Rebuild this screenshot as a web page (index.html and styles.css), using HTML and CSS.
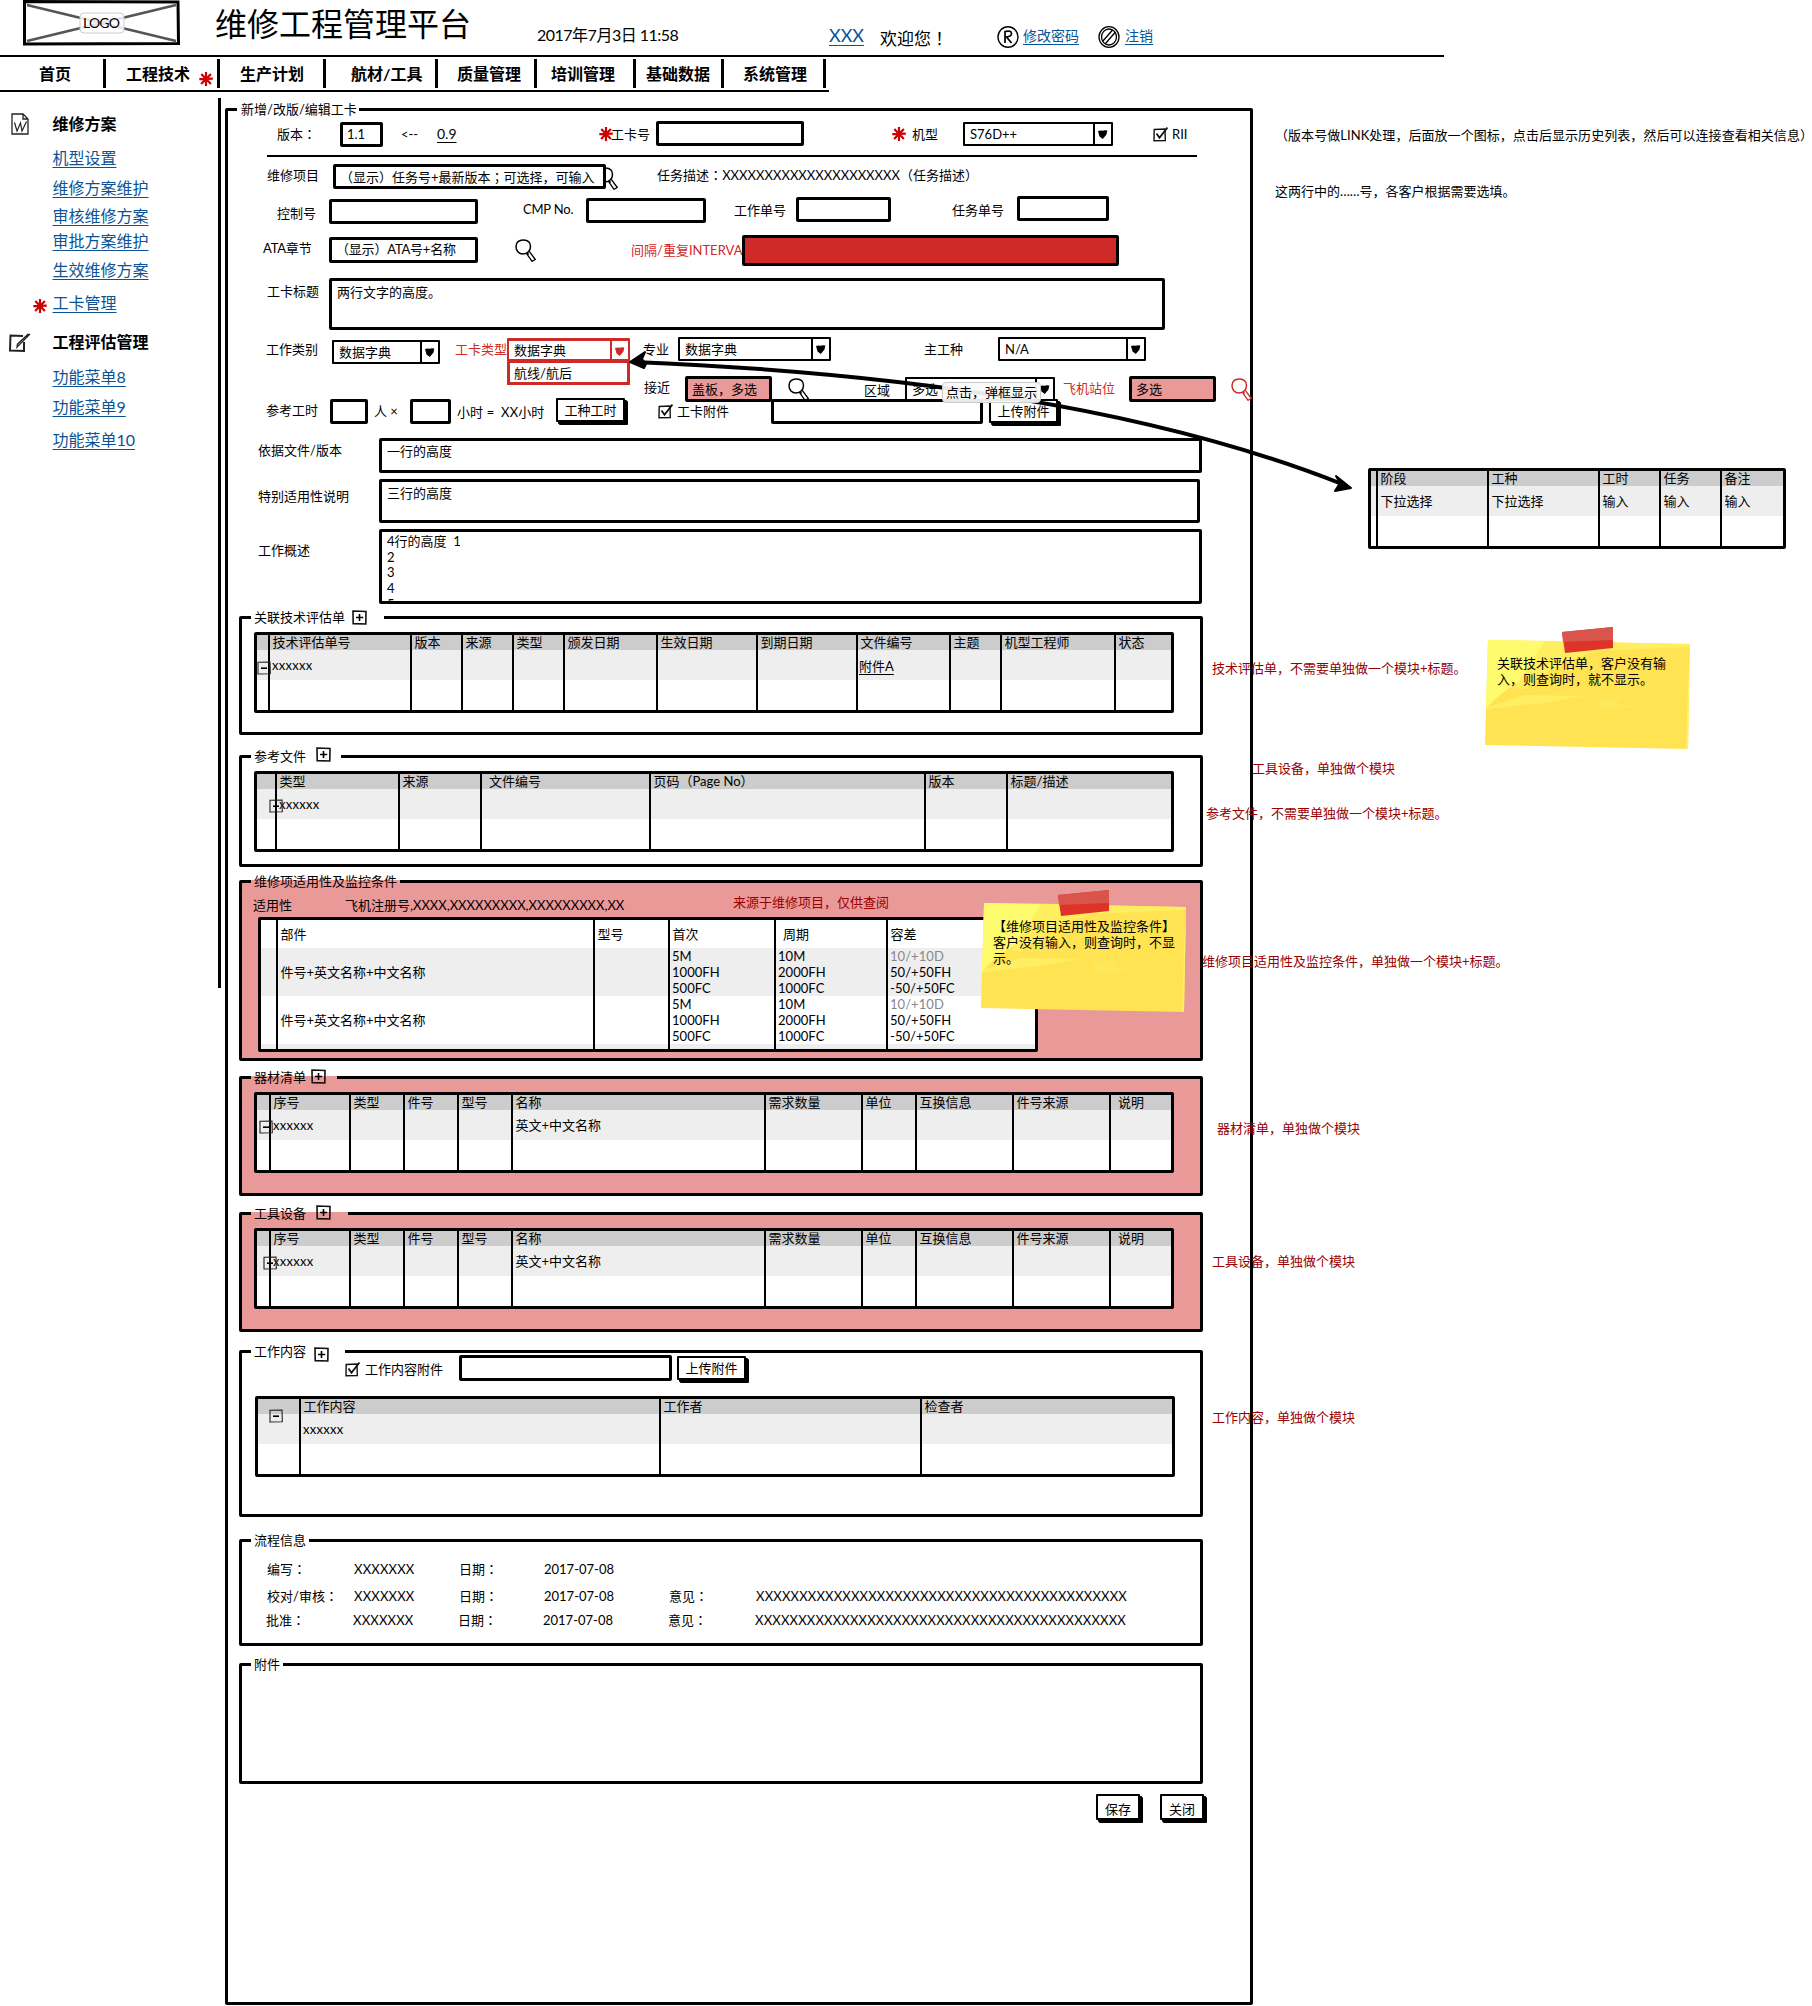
FILE: index.html
```html
<!DOCTYPE html>
<html lang="zh-CN">
<head>
<meta charset="utf-8">
<title>维修工程管理平台</title>
<link rel="stylesheet" href="styles.css">
</head>
<body>
<svg class="defs" width="0" height="0">
  <symbol id="star" viewBox="0 0 14 14"><path d="M7 0V14M.3 7.200L13.800 6.600M2.300 2.100L11.900 11.900M11.900 1.900L2.100 12.100" fill="none" stroke="#cc0000" stroke-width="2.200"/></symbol>
  <symbol id="lens" viewBox="0 0 21 23"><path d="M8.500 1C4 .8 1 3.500 1 7.500C1 12 4 15 8 15C12.500 15 15.500 11.500 15.500 7.500C15.500 3.500 12.500 1.200 8.500 1Z" fill="none" stroke="currentColor" stroke-width="1.500"/><path d="M11.300 14.200L17 22.300L20.300 20.500L14.300 12.400M12.300 13.500L13.600 15.500" fill="none" stroke="currentColor" stroke-width="1.300"/></symbol>
  <symbol id="check" viewBox="0 0 15 15"><path d="M1.200 2.500L12 2L12.300 13.500L1 13.800Z" fill="none" stroke="#111" stroke-width="1.400"/><path d="M3.500 6.500L6.500 10.800L14.500 .5" fill="none" stroke="#111" stroke-width="1.800"/></symbol>
  <symbol id="plus" viewBox="0 0 15 15"><path d="M1 1L14 1.500L13.800 14L1.200 13.600Z" fill="none" stroke="#111" stroke-width="1.600"/><path d="M7.500 4V11M4 7.500H11.200" stroke="#000" stroke-width="1.600"/></symbol>
  <symbol id="minus" viewBox="0 0 14 14"><path d="M1 1.200L13 1L13.300 12.800L1 13Z" fill="none" stroke="#222" stroke-width="1.100"/><path d="M4 7.200H10" stroke="#000" stroke-width="1.600"/></symbol>
  <symbol id="down" viewBox="0 0 11 11"><path d="M1 2L3.500 1.400L5.500 1.800L8 1.200L10.300 1.500L9.500 5.500L5.800 10L2.500 7.500Z" fill="currentColor"/></symbol>
  <symbol id="note" viewBox="0 0 206 124" preserveAspectRatio="none">
    <path d="M3 13L205 17L203 122L0 118Z" fill="#ffe352"/>
    <path d="M3 13L80 14L60 34L38 52L20 64L8 74L1 82Z" fill="#fffb6e"/>
    <path d="M60 14L205 17L205 20L110 24L70 40L40 62L30 60Z" fill="#ffee5f"/>
    <path d="M2 80L40 68L98 69L60 76L2 82Z" fill="#ffee62"/>
    <path d="M112 73L140 69L130 76L150 80L118 84Z" fill="#ffe75c"/>
    <path d="M205 17L203 122L201 121L203 60Z" fill="#fff06a"/>
    <path d="M77 5L128 0L128 21L80 26Z" fill="#dd3329"/>
    <path d="M77 5L128 0L128 13L78 15Z" fill="#d9544b"/>
  </symbol>
</svg>

<header class="top">
  <svg class="logo" viewBox="0 0 157 45"><path d="M1.500 1.500L155 2L155.500 43.500L1.500 44Z" fill="#fff" stroke="#000" stroke-width="3"/><path d="M4 5L153 41M4 41L153 5" stroke="#555" stroke-width="2.600"/><rect x="57" y="13" width="44" height="20" rx="4" fill="#fff" fill-opacity=".85" stroke="#ccc"/><text x="78.500" y="27.500" text-anchor="middle" textLength="37">LOGO</text></svg>
  <h1 class="m4">维修工程管理平台</h1>
  <span class="date m25">2017年7月3日 11:58</span>
  <a class="user m25">XXX</a>
  <span class="hello m28">欢迎您<span class="mid" lang="zh-TW">！</span></span>
  <svg class="round m26" viewBox="0 0 22 22"><ellipse cx="11" cy="11" rx="10" ry="10.300" fill="none" stroke="#000" stroke-width="1.400"/><path d="M8 17V5.500Q14.500 4 14.500 7.500Q14.500 10.500 9.500 11L14.500 17" fill="none" stroke="#000" stroke-width="1.700"/></svg>
  <a class="act m26">修改密码</a>
  <svg class="round m26" viewBox="0 0 22 22"><ellipse cx="11" cy="11" rx="10" ry="10.300" fill="none" stroke="#000" stroke-width="1.300"/><ellipse cx="11" cy="11" rx="7.500" ry="8" fill="none" stroke="#000" stroke-width="1.300"/><path d="M4.500 15.500L14.500 4M7.500 17.500L17.500 6" stroke="#000" stroke-width="1.300"/></svg>
  <a class="act m26">注销</a>
</header>
<nav class="menu">
  <span class="n1">首页</span><span class="n2">工程技术<svg class="star"><use href="#star"/></svg></span><span class="n3">生产计划</span><span class="n4">航材/工具</span><span class="n5">质量管理</span><span class="n6">培训管理</span><span class="n7">基础数据</span><span class="n8">系统管理</span>
</nav>

<div class="layout">
<aside class="side">
  <svg class="i-doc" viewBox="0 0 18 22"><path d="M1 1H12L17 6V21H1ZM12 1V6H17" fill="none" stroke="#222" stroke-width="1.300"/><path d="M3.500 9.500L6 18L9.500 10L11 18L15.500 8.500" fill="none" stroke="#222" stroke-width="1.200"/></svg>
  <svg class="i-pen" viewBox="0 0 22 19"><path d="M14 3L1.500 2.500L1 17.500L15 18V9" fill="none" stroke="#222" stroke-width="2"/><path d="M21 1L10 12L8 14L8.500 11L19.500 .8" fill="none" stroke="#222" stroke-width="1.300"/></svg>
  <svg class="star i-star"><use href="#star"/></svg>
  <b>维修方案</b><a>机型设置</a><a>维修方案维护</a><a>审核维修方案</a><a>审批方案维护</a><a>生效维修方案</a><a>工卡管理</a><b>工程评估管理</b><a>功能菜单8</a><a>功能菜单9</a><a>功能菜单10</a>
</aside>

<main class="panel">
  <div class="legend lg-main"><span>新增/改版/编辑工卡</span></div>

  <div class="row r1">
    <label class="m8">版本<span class="mid" lang="zh-TW">：</span></label><div class="box w43 m3">1.1</div><span class="m8">&lt;--</span><span class="m8"><u class="ver">0.9</u></span>
    <svg class="star m8"><use href="#star"/></svg><label class="m8">工卡号</label><div class="box w148 m2"></div>
    <svg class="star m8"><use href="#star"/></svg><label class="m8">机型</label>
    <div class="select w150 m3"><span>S76D++</span><i><svg><use href="#down"/></svg></i></div>
    <svg class="check m8"><use href="#check"/></svg><label class="m8">RII</label>
  </div>
  <hr>
  <div class="row r2">
    <label class="m11">维修项目</label><div class="box w273 m7 front">（显示）任务号+最新版本<span class="mid" lang="zh-TW">；</span>可选择，可输入</div><svg class="lens m10"><use href="#lens"/></svg>
    <span class="m11 desc">任务描述<span class="mid" lang="zh-TW">：</span>XXXXXXXXXXXXXXXXXXXXX（任务描述）</span>
  </div>
  <div class="row r3">
    <label class="m11">控制号</label><div class="box w149 m4"></div><label class="m7 tight">CMP No.</label><div class="box w120 m3"></div>
    <label class="m8">工作单号</label><div class="box w95 m2"></div><label class="m8">任务单号</label><div class="box w92 m1"></div>
  </div>
  <div class="row r4">
    <label class="m9 tight">ATA章节</label><div class="box w149 m5 narrow">（显示）ATA号+名称</div><svg class="lens m7"><use href="#lens"/></svg>
    <label class="m11 red">间隔/重复INTERVA</label><div class="box alert w377 m3"></div>
  </div>
  <div class="row r5"><label class="m10">工卡标题</label><div class="area a1 m4">两行文字的高度。</div></div>
  <div class="row r6">
    <label class="m8">工作类别</label><div class="select w108 m6"><span>数据字典</span><i><svg><use href="#down"/></svg></i></div>
    <label class="m8 red">工卡类型</label>
    <div class="combo m4"><div class="select"><span>数据字典</span><i><svg><use href="#down"/></svg></i></div><div class="option">航线/航后</div></div>
    <label class="m8 shift">专业</label><div class="select w153 m3"><span>数据字典</span><i><svg><use href="#down"/></svg></i></div>
    <label class="m8">主工种</label><div class="select w148 m3"><span>N/A</span><i><svg><use href="#down"/></svg></i></div>
  </div>
  <div class="row r7">
    <label class="m6 shift">接近</label><div class="box pink w87 m2">盖板，多选</div><svg class="lens m4"><use href="#lens"/></svg>
    <label class="m9">区域</label><div class="select w150 m3"><span>多选</span><i><svg><use href="#down"/></svg></i></div>
    <label class="m7 red">飞机站位</label><div class="box pink w87 m2">多选</div><svg class="lens red m4"><use href="#lens"/></svg>
  </div>
  <div class="row r8">
    <label class="m5">参考工时</label><div class="box w38 m1"></div><span class="m6">人 ×</span><div class="box w41 m1"></div><span class="m7 hours">小时 =&nbsp; XX小时</span>
    <button class="w69">工种工时</button>
    <svg class="check m6"><use href="#check"/></svg><label class="m6">工卡附件</label><div class="box w212 m1"></div><button class="w69 m1">上传附件</button>
  </div>
  <div class="row r9"><label class="m9">依据文件/版本</label><div class="area a2 m4">一行的高度</div></div>
  <div class="row r10"><label class="m12">特别适用性说明</label><div class="area a3 m2">三行的高度</div></div>
  <div class="row r11"><label class="m16">工作概述</label><div class="area a4 m2">4行的高度&nbsp; 1<br>2<br>3<br>4<br>5</div></div>

  <section class="group g1">
    <div class="legend lg1"><span>关联技术评估单</span><svg class="plus"><use href="#plus"/></svg></div>
    <table class="grid t1">
      <tr><th></th><th>技术评估单号</th><th>版本</th><th>来源</th><th>类型</th><th>颁发日期</th><th>生效日期</th><th>到期日期</th><th>文件编号</th><th>主题</th><th>机型工程师</th><th>状态</th></tr>
      <tr><td></td><td class="x">xxxxxx</td><td></td><td></td><td></td><td></td><td></td><td></td><td class="att"><u>附件A</u></td><td></td><td></td><td></td></tr>
      <tr><td></td><td></td><td></td><td></td><td></td><td></td><td></td><td></td><td></td><td></td><td></td><td></td></tr>
    </table>
    <svg class="minus p1"><use href="#minus"/></svg>
  </section>

  <section class="group g2">
    <div class="legend lg2"><span>参考文件</span><svg class="plus up"><use href="#plus"/></svg></div>
    <table class="grid t2">
      <tr><th></th><th>类型</th><th>来源</th><th class="in">文件编号</th><th>页码（Page No）</th><th>版本</th><th>标题/描述</th></tr>
      <tr><td></td><td class="x">xxxxxx</td><td></td><td></td><td></td><td></td><td></td></tr>
      <tr><td></td><td></td><td></td><td></td><td></td><td></td><td></td></tr>
    </table>
    <svg class="minus p2"><use href="#minus"/></svg>
  </section>

  <section class="group g3 fill">
    <div class="legend lg3"><span>维修项适用性及监控条件</span></div>
    <div class="row apply"><label>适用性</label><span class="regs">飞机注册号,XXXX,XXXXXXXXX,XXXXXXXXX,XX</span><span class="dark src">来源于维修项目，仅供查阅</span></div>
    <table class="grid t3">
      <tr><th></th><th>部件</th><th>型号</th><th>首次</th><th class="in">周期</th><th>容差</th></tr>
      <tr><td></td><td>件号+英文名称+中文名称</td><td></td><td class="num">5M<br>1000FH<br>500FC</td><td class="num">10M<br>2000FH<br>1000FC</td><td class="num"><em>10/+10D</em><br>50/+50FH<br>-50/+50FC</td></tr>
      <tr><td></td><td>件号+英文名称+中文名称</td><td></td><td class="num">5M<br>1000FH<br>500FC</td><td class="num">10M<br>2000FH<br>1000FC</td><td class="num"><em>10/+10D</em><br>50/+50FH<br>-50/+50FC</td></tr>
      <tr><td></td><td></td><td></td><td></td><td></td><td></td></tr>
    </table>
  </section>

  <section class="group g4 fill">
    <div class="legend lg4"><span>器材清单</span><svg class="plus up1"><use href="#plus"/></svg></div>
    <table class="grid t4">
      <tr><th></th><th>序号</th><th>类型</th><th>件号</th><th>型号</th><th>名称</th><th>需求数量</th><th>单位</th><th>互换信息</th><th>件号来源</th><th class="in">说明</th></tr>
      <tr><td></td><td class="x">xxxxxx</td><td></td><td></td><td></td><td>英文+中文名称</td><td></td><td></td><td></td><td></td><td></td></tr>
      <tr><td></td><td></td><td></td><td></td><td></td><td></td><td></td><td></td><td></td><td></td><td></td></tr>
    </table>
    <svg class="minus p4"><use href="#minus"/></svg>
  </section>

  <section class="group g5 fill">
    <div class="legend lg5"><span>工具设备</span><svg class="plus up1"><use href="#plus"/></svg></div>
    <table class="grid t4">
      <tr><th></th><th>序号</th><th>类型</th><th>件号</th><th>型号</th><th>名称</th><th>需求数量</th><th>单位</th><th>互换信息</th><th>件号来源</th><th class="in">说明</th></tr>
      <tr><td></td><td class="x">xxxxxx</td><td></td><td></td><td></td><td>英文+中文名称</td><td></td><td></td><td></td><td></td><td></td></tr>
      <tr><td></td><td></td><td></td><td></td><td></td><td></td><td></td><td></td><td></td><td></td><td></td></tr>
    </table>
    <svg class="minus p5"><use href="#minus"/></svg>
  </section>

  <section class="group g6">
    <div class="legend lg6"><span>工作内容</span><svg class="plus dn"><use href="#plus"/></svg></div>
    <div class="row upload"><svg class="check m9"><use href="#check"/></svg><label class="m9">工作内容附件</label><div class="box w213 m2"></div><button class="w69 m3">上传附件</button></div>
    <table class="grid t6">
      <tr><th></th><th>工作内容</th><th>工作者</th><th>检查者</th></tr>
      <tr><td></td><td class="x">xxxxxx</td><td></td><td></td></tr>
      <tr><td></td><td></td><td></td><td></td></tr>
    </table>
    <svg class="minus p6"><use href="#minus"/></svg>
  </section>

  <section class="group g7">
    <div class="legend lg7"><span>流程信息</span></div>
    <div class="row flow f1"><span>编写<span class="mid" lang="zh-TW">：</span></span><span class="xs">XXXXXXX</span><span>日期<span class="mid" lang="zh-TW">：</span></span><span class="day">2017-07-08</span></div>
    <div class="row flow f2"><span>校对/审核<span class="mid" lang="zh-TW">：</span></span><span class="xs">XXXXXXX</span><span>日期<span class="mid" lang="zh-TW">：</span></span><span class="day">2017-07-08</span><span>意见<span class="mid" lang="zh-TW">：</span></span><span class="xs">XXXXXXXXXXXXXXXXXXXXXXXXXXXXXXXXXXXXXXXXXXX</span></div>
    <div class="row flow f3"><span>批准<span class="mid" lang="zh-TW">：</span></span><span class="xs">XXXXXXX</span><span>日期<span class="mid" lang="zh-TW">：</span></span><span class="day">2017-07-08</span><span>意见<span class="mid" lang="zh-TW">：</span></span><span class="xs">XXXXXXXXXXXXXXXXXXXXXXXXXXXXXXXXXXXXXXXXXXX</span></div>
  </section>

  <section class="group g8"><div class="legend lg8"><span>附件</span></div></section>

  <div class="buttons"><button>保存</button><button>关闭</button></div>
</main>
</div>

<!-- Review notes pinned over the form -->
<p class="pin k1">（版本号做LINK处理，后面放一个图标，点击后显示历史列表，然后可以连接查看相关信息）</p>
<p class="pin k2">这两行中的<span class="dots">……</span>号，各客户根据需要选填。</p>
<p class="pin dark d1">技术评估单，不需要单独做一个模块+标题。</p>
<p class="pin dark d2">工具设备，单独做个模块</p>
<p class="pin dark d3">参考文件，不需要单独做一个模块+标题。</p>
<p class="pin dark d4">维修项目适用性及监控条件，单独做一个模块+标题。</p>
<p class="pin dark d5">器材清单，单独做个模块</p>
<p class="pin dark d6">工具设备，单独做个模块</p>
<p class="pin dark d7">工作内容，单独做个模块</p>

<div class="pin popup">
  <table class="grid t9">
    <tr><th></th><th>阶段</th><th>工种</th><th>工时</th><th>任务</th><th>备注</th></tr>
    <tr><td></td><td>下拉选择</td><td>下拉选择</td><td>输入</td><td>输入</td><td>输入</td></tr>
    <tr><td></td><td></td><td></td><td></td><td></td><td></td></tr>
  </table>
</div>

<div class="pin note s1"><svg><use href="#note"/></svg><p>【维修项目适用性及监控条件】<br>客户没有输入，则查询时，不显<br>示。</p></div>
<div class="pin note s2"><svg><use href="#note"/></svg><p>关联技术评估单，客户没有输<br>入，则查询时，就不显示。</p></div>

<svg class="pin arrow" viewBox="0 0 740 150"><path d="M14 12Q460 30 722 134" fill="none" stroke="#000" stroke-width="4"/><path d="M10 12L25 2L22 9L26 14L24 18Z M731 138L716 126L720 133L715 141Z" fill="#000" stroke="#000" stroke-width="2" stroke-linejoin="round"/></svg>
<span class="pin tip">点击，弹框显示</span>
</body>
</html>
```
FILE: styles.css
```css
* { box-sizing: border-box; }
body {
  margin: 0; width: 1812px; height: 2006px; position: relative; overflow: hidden;
  background: #fff; color: #000;
  font: 13px/16px Lato, "Noto Sans CJK SC", sans-serif;
}
p, h1 { margin: 0; }
svg { display: block; overflow: visible; }
.defs { position: absolute; }
a { color: #0b5394; text-decoration: underline; text-decoration-thickness: 1px; text-underline-offset: 3px; }
.red { color: #cf2a27; }
.dark { color: #990000; }
.tight { letter-spacing: -.2px; }
.mid { font-family: "Noto Sans CJK TC", sans-serif; }
.dots { font-family: Lato, sans-serif; }
.m1 { margin-top: 1px; } .m2 { margin-top: 2px; } .m3 { margin-top: 3px; } .m4 { margin-top: 4px; }
.m5 { margin-top: 5px; } .m6 { margin-top: 6px; } .m7 { margin-top: 7px; } .m8 { margin-top: 8px; }
.m9 { margin-top: 9px; } .m10 { margin-top: 10px; } .m11 { margin-top: 11px; } .m12 { margin-top: 12px; }
.m16 { margin-top: 16px; } .m25 { margin-top: 25px; } .m26 { margin-top: 26px; } .m28 { margin-top: 28px; }

/* icons */
.star { width: 14px; height: 14px; }
.check { width: 15px; height: 15px; }
.lens { width: 21px; height: 23px; }
.plus { width: 15px; height: 15px; }
.minus { position: absolute; width: 14px; height: 14px; }

/* header */
.top {
  display: grid; grid-template-columns: 192px 322px 292px 51px 117px 26px 75px 27px 1fr;
  align-items: start; width: 1444px; height: 57px; padding-left: 23px; border-bottom: 2px solid #000; white-space: nowrap;
}
.logo { width: 157px; height: 45px; font: 14px Lato, sans-serif; }
h1 { font-size: 32px; line-height: 40px; font-weight: 400; }
.date { font-size: 16px; line-height: 20px; letter-spacing: -.5px; }
.user { font-size: 18px; line-height: 20px; }
.hello { font-size: 17px; line-height: 20px; }
.act { font-size: 14px; line-height: 20px; }
.round { width: 22px; height: 22px; }
.menu { display: flex; width: 829px; height: 35px; padding-top: 2px; border-bottom: 2px solid #000; font-size: 16px; font-weight: 700; line-height: 30px; }
.menu span { display: flex; height: 29px; border-right: 3px solid #000; white-space: nowrap; }
.menu .star { margin: 13px 0 0 9px; }
.n1 { width: 106px; padding-left: 39px; }
.n2 { width: 114px; padding-left: 20px; }
.n3 { width: 106px; padding-left: 20px; }
.n4 { width: 112px; padding-left: 25px; }
.n5 { width: 99px; padding-left: 19px; }
.n6 { width: 99px; padding-left: 14px; }
.n7 { width: 88px; padding-left: 10px; }
.n8 { width: 102px; padding-left: 19px; }

/* sidebar */
.layout { display: flex; align-items: flex-start; }
.side {
  display: grid; grid-template-columns: 43.5px 1fr;
  grid-template-rows: 34px 30px 28px 25px 29px 33px 39px 35px 30px 33px 20px;
  align-content: start; align-items: start; width: 221px; height: 890px; margin-top: 6px;
  padding: 16px 0 0 9px; border-right: 3px solid #000; font-size: 16px; line-height: 20px;
}
.side a, .side b { grid-column: 2; justify-self: start; }
.i-doc { grid-area: 1 / 1; width: 18px; height: 22px; margin: -1px 0 0 2px; }
.i-pen { grid-area: 8 / 1; width: 22px; height: 19px; margin-top: 1px; }
.i-star { grid-area: 7 / 1; margin: 6px 0 0 24px; }

/* form panel */
.panel { position: relative; width: 1028px; height: 1897px; margin: 16px 0 0 4px; padding-top: 8px; border: 3px solid #000; border-radius: 2px; background: #fff; }
.row { display: grid; align-items: start; white-space: nowrap; }
.row > label, .row > span { display: block; line-height: 14px; margin-left: -1px; }
.row > .shift { margin-left: 0; }
hr { width: 930px; height: 2px; margin: 0 0 0 39px; border: 0; background: #000; }
.r1 { height: 36px; padding-left: 50px; grid-template-columns: 62px 62px 36px 161px 13px 44px 236px 21px 50px 190px 20px 1fr; }
.r2 { height: 38px; padding-left: 40px; grid-template-columns: 65px 264px 61px 1fr; }
.r3 { height: 37px; padding-left: 50px; grid-template-columns: 51px 195px 62px 149px 61px 157px 64px 1fr; }
.r4 { height: 42px; padding-left: 36px; grid-template-columns: 65px 186px 117px 110px 1fr; }
.r5 { height: 60px; padding-left: 40px; grid-template-columns: 61px 1fr; }
.r6 { height: 40px; padding-left: 39px; grid-template-columns: 65px 124px 51px 136px 35px 247px 73px 1fr; }
.r7 { height: 24px; padding-left: 416px; grid-template-columns: 41px 103px 77px 40px 159px 65px 102px 1fr; }
.r8 { height: 36px; padding-left: 39px; grid-template-columns: 63px 45px 35px 48px 98px 102px 20px 93px 218px 1fr; }
.r9 { height: 43px; } .r10 { height: 50px; } .r11 { height: 89px; }
.r9, .r10, .r11 { padding-left: 31px; grid-template-columns: 120px 1fr; }
.front { z-index: 1; }
.desc { letter-spacing: .03px; }
.hours { letter-spacing: .1px; }
.ver { font-size: 14px; text-underline-offset: 3px; }

.box { height: 25px; padding: 0 4px; line-height: 19px; border: 3px solid #000; border-radius: 2px; background: #fff; }
.narrow { letter-spacing: -.2px; }
.r4 .box { height: 26px; }
.r4 .alert { height: 31px; background: #cf2a27; }
.pink { height: 26px; background: #ea9999; }
.row .pink { line-height: 20px; }
.select { display: flex; height: 24px; border: 2px solid #000; border-radius: 1px; background: #fff; line-height: 20px; }
.select span { flex: 1; padding-left: 5px; }
.select i { width: 18px; border-left: 2px solid #000; }
.select i svg { width: 11px; height: 11px; margin: 5px 0 0 2px; }
.combo { width: 123px; }
.combo .select { color: #cf2a27; border-color: #cf2a27; border-width: 3px 2px; line-height: 18px; }
.combo .select span, .option { color: #000; }
.combo .select i { border-color: #cf2a27; }
.option { height: 23px; padding-left: 4px; line-height: 20px; border: 3px solid #cf2a27; border-top-width: 1px; background: #fff; }
.area { border: 3px solid #000; border-radius: 2px; background: #fff; padding: 3px 5px 0; overflow: hidden; }
.a1 { width: 836px; height: 52px; }
.a2 { width: 823px; height: 35px; padding-top: 2px; }
.a3 { width: 821px; height: 44px; }
.a4 { width: 823px; height: 75px; padding-top: 2px; line-height: 15.7px; }
button { height: 24px; padding: 0; font: inherit; color: #000; background: #fff; border: 2px solid #000; border-radius: 1px; box-shadow: 2px 2px 0 #000, 3px 3px 0 #000; }
.w38 { width: 38px; } .w41 { width: 41px; } .w43 { width: 43px; } .w69 { width: 69px; }
.w87 { width: 87px; } .w92 { width: 92px; } .w95 { width: 95px; } .w108 { width: 108px; } .w120 { width: 120px; }
.w148 { width: 148px; } .w149 { width: 149px; } .w150 { width: 150px; } .w153 { width: 153px; } .w212 { width: 212px; }
.w213 { width: 213px; } .w273 { width: 273px; } .w377 { width: 377px; }

/* groups: the legend strip interrupts the top border */
.group { position: relative; width: 964px; margin-left: 11px; border: 3px solid #000; border-radius: 2px; background: #fff; }
.fill { background: #ea9999; }
.legend { position: absolute; top: -3px; left: 9px; height: 3px; line-height: 2px; padding-left: 3px; display: flex; align-items: center; justify-content: space-between; background: inherit; white-space: nowrap; }
.legend span { margin-top: -2px; }
.lg-main { width: 122px; padding-left: 4px; }
.lg1 { width: 133px; padding-right: 17px; }
.lg2 { width: 90px; padding-right: 10px; }
.lg3 { width: 149px; }
.lg4 { width: 86px; padding-right: 11px; }
.lg5 { width: 97px; padding-right: 17px; }
.lg6 { width: 94px; padding-right: 16px; }
.lg7 { width: 58px; }
.lg8 { width: 32px; }
.legend .plus { flex: none; }
.legend .up { margin-top: -5px; }
.legend .up1 { margin-top: -2px; }
.legend .dn { margin-top: 5px; }
.g1 { height: 119px; padding: 13px 0 0 12px; }
.g2 { height: 112px; margin-top: 20px; padding: 13px 0 0 12px; }
.g3 { height: 181px; margin-top: 13px; padding: 15px 0 0 12px; }
.g4 { height: 120px; margin-top: 15px; padding: 13px 0 0 12px; }
.g5 { height: 120px; margin-top: 16px; padding: 13px 0 0 12px; }
.g6 { height: 167px; margin-top: 18px; padding-left: 13px; }
.g7 { height: 107px; margin-top: 22px; padding-top: 20px; }
.g8 { height: 121px; margin-top: 17px; }
.apply { height: 19px; grid-template-columns: 92px 388px 1fr; }
.src { margin-top: -3px; }
.upload { height: 43px; padding-left: 90px; grid-template-columns: 21px 93px 218px 1fr; }
.upload .box { height: 26px; }
.flow { grid-template-columns: 87px 105px 85px 125px 87px 1fr; }
.xs { letter-spacing: .19px; }
.f1 { height: 27px; padding-left: 26px; }
.f2 { height: 24px; padding-left: 26px; }
.f3 { height: 24px; padding-left: 25px; }
.p1 { left: 15px; top: 42px; } .p2 { left: 27px; top: 41px; } .p4 { left: 17px; top: 41px; }
.p5 { left: 21px; top: 41px; } .p6 { left: 27px; top: 56px; }
.buttons { display: flex; gap: 20px; margin: 10px 0 0 868px; }
.buttons button { width: 44px; height: 26px; padding-top: 4px; }

/* data grids */
.grid { width: 920px; table-layout: fixed; border-collapse: separate; border-spacing: 0; border: 3px solid #000; border-radius: 2px; background: #fff; }
.grid th, .grid td { padding: 0 0 0 2.5px; border-right: 2px solid #000; text-align: left; font-weight: 400; white-space: nowrap; overflow: visible; }
.grid th:last-child, .grid td:last-child { border-right: 0; }
.grid th { height: 15px; line-height: 15px; background: #ccc; }
.grid td { height: 30px; }
.grid tr:nth-child(2) td { background: #eee; }
.grid .in { padding-left: 7px; }
.grid .x { padding-left: 2px; letter-spacing: .3px; }
.att u { text-underline-offset: 3px; }
.grid .att { padding: 2px 0 0 1px; }
.t1 th:nth-child(1) { width: 13px; } .t1 th:nth-child(2) { width: 142px; }
.t1 th:nth-child(n+3):nth-child(-n+5), .t1 th:nth-child(10) { width: 51px; }
.t1 th:nth-child(6), .t1 th:nth-child(9) { width: 93px; }
.t1 th:nth-child(7), .t1 th:nth-child(8) { width: 100px; }
.t1 th:nth-child(11) { width: 114px; }
.t2 th:nth-child(1) { width: 20px; } .t2 th:nth-child(2) { width: 123px; }
.t2 th:nth-child(3), .t2 th:nth-child(6) { width: 82px; }
.t2 th:nth-child(4) { width: 169px; } .t2 th:nth-child(5) { width: 275px; }
.t3 { width: 780px; margin-left: 4px; }
.t3 th { height: 28px; background: #fff; }
.t3 td { height: 48px; }
.t3 tr:nth-child(4) td { height: 5px; background: #eee; }
.t3 th:nth-child(1) { width: 17px; } .t3 th:nth-child(2) { width: 317px; } .t3 th:nth-child(3) { width: 75px; }
.t3 th:nth-child(4) { width: 106px; } .t3 th:nth-child(5) { width: 112px; }
.grid .num { padding-left: 2px; letter-spacing: .05px; }
.num em { font-style: normal; color: #88868e; }
.t4 th:nth-child(1) { width: 14px; } .t4 th:nth-child(2) { width: 80px; }
.t4 th:nth-child(n+3):nth-child(-n+5), .t4 th:nth-child(8) { width: 54px; }
.t4 th:nth-child(6) { width: 253px; }
.t4 th:nth-child(7), .t4 th:nth-child(9), .t4 th:nth-child(10) { width: 97px; }
.t6 th:nth-child(1) { width: 43px; } .t6 th:nth-child(2) { width: 360px; } .t6 th:nth-child(3) { width: 261px; }
.t9 { width: 418px; }
.t9 th:nth-child(1) { width: 7px; } .t9 th:nth-child(2), .t9 th:nth-child(3) { width: 111px; }
.t9 th:nth-child(4), .t9 th:nth-child(5) { width: 61px; }

/* pinned notes */
.pin { position: absolute; white-space: nowrap; }
.k1 { left: 1275px; top: 127px; letter-spacing: .05px; } .k2 { left: 1275px; top: 183px; }
.d1 { left: 1212px; top: 660px; } .d2 { left: 1252px; top: 760px; } .d3 { left: 1206px; top: 805px; }
.d4 { left: 1202px; top: 953px; } .d5 { left: 1217px; top: 1120px; } .d6 { left: 1212px; top: 1253px; } .d7 { left: 1212px; top: 1409px; }
.popup { left: 1368px; top: 468px; }
.note { width: 206px; height: 124px; }
.note svg { position: absolute; width: 206px; height: 124px; }
.note p { position: relative; padding: 28px 0 0 12px; }
.s1 { left: 981px; top: 890px; } .s2 { left: 1485px; top: 627px; }
.arrow { left: 620px; top: 350px; width: 740px; height: 150px; }
.tip { left: 942px; top: 382px; height: 21px; padding: 0 3px; line-height: 19px; border: 1px solid #ccc; border-radius: 4px; background: rgba(250, 250, 250, .93); }
```
